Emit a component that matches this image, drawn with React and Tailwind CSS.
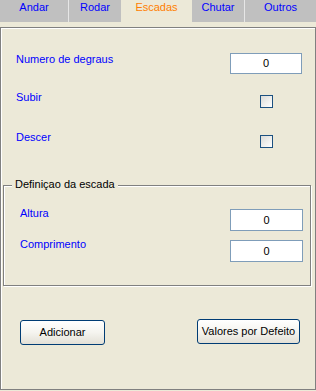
import React from 'react';

const TABS = [
  { label: 'Andar', w: 'w-[69px]', sep: true },
  { label: 'Rodar', w: 'w-[52px]' },
  { label: 'Escadas', w: 'w-[71px]', active: true },
  { label: 'Chutar', w: 'w-[53px]', sep: true },
  { label: 'Outros', w: 'flex-1' },
];

function Tab({ label, w, active, sep }) {
  return (
    <div
      className={`${w} h-[22px] pt-[1px] text-center leading-[13px] ${
        active ? 'bg-[#ece9d8] text-[#ff7f00]' : 'bg-[#c0c0c0] text-[#0000ff]'
      } ${sep ? 'border-r border-[#e6e6e6]' : ''}`}
    >
      {label}
    </div>
  );
}

function Field({ w = 'w-[72px]', h = 'h-[21px]', className = '' }) {
  return (
    <div className={`${w} ${h} ${className} border border-[#7f9db9] bg-white flex items-center justify-center text-black`}>
      0
    </div>
  );
}

function Check({ className = '' }) {
  return (
    <div className={`w-[72px] flex justify-center ${className}`}>
      <div className="w-[13px] h-[13px] border border-[#1c5180] bg-gradient-to-br from-[#dcdcd7] to-white" />
    </div>
  );
}

function XpButton({ children, className = '' }) {
  return (
    <button
      className={`h-[25px] rounded-[3px] border border-[#003c74] bg-gradient-to-b from-white via-[#f5f4ef] to-[#e3e0d6] text-black text-[11px] leading-[13px] ${className}`}
    >
      {children}
    </button>
  );
}

export default function App() {
  return (
    <div className="w-[316px] h-[391px] bg-[#ece9d8] flex flex-col text-[11px] font-['Liberation_Sans',Arial,sans-serif]">
      <div className="flex h-[22px]">
        {TABS.map(t => <Tab key={t.label} {...t} />)}
      </div>

      <div className="mt-[5px] h-[363px] border border-[#808080] shadow-[inset_1px_1px_0_#fff] flex flex-col">
        <div className="mt-[25px] flex justify-between items-start pl-[15px] pr-[13px]">
          <span className="text-[#0000ff] leading-[13px]">Numero de degraus</span>
          <Field />
        </div>

        <div className="mt-[17px] flex justify-between items-start pl-[15px] pr-[13px]">
          <span className="text-[#0000ff] leading-[13px]">Subir</span>
          <Check className="mt-[4px]" />
        </div>

        <div className="mt-[23px] flex justify-between items-start pl-[15px] pr-[13px]">
          <span className="text-[#0000ff] leading-[13px]">Descer</span>
          <Check className="mt-[4px]" />
        </div>

        <div className="relative mt-[37px] ml-[2px] w-[308px] h-[101px] border border-[#808080] shadow-[inset_1px_1px_0_#fff,1px_1px_0_#fff]">
          <span className="absolute left-[8px] top-[-8px] px-[3px] bg-[#ece9d8] text-black leading-[13px]">
            Definiçao da escada
          </span>
          <div className="mt-[21px] flex justify-between items-start pl-[16px] pr-[7px]">
            <span className="text-[#0000ff] leading-[13px]">Altura</span>
            <Field w="w-[73px]" h="h-[22px]" className="mt-[2px]" />
          </div>
          <div className="mt-[7px] flex justify-between items-start pl-[16px] pr-[7px]">
            <span className="text-[#0000ff] leading-[13px]">Comprimento</span>
            <Field w="w-[73px]" h="h-[22px]" className="mt-[2px]" />
          </div>
        </div>

        <div className="mt-[33px] flex justify-between items-start pl-[19px] pr-[15px]">
          <XpButton className="w-[85px] mt-[1px]">Adicionar</XpButton>
          <XpButton className="w-[103px]">Valores por Defeito</XpButton>
        </div>
      </div>
    </div>
  );
}
